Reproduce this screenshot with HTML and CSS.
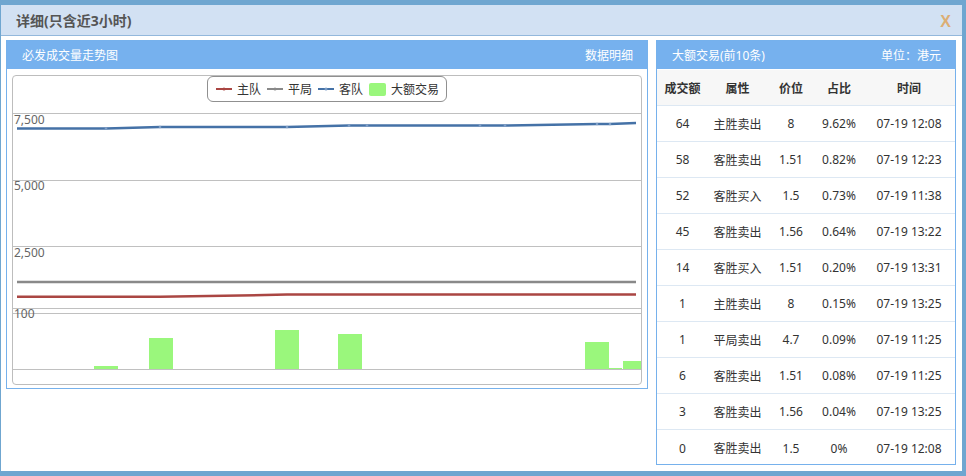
FILE: index.html
```html
<!DOCTYPE html>
<html lang="zh">
<head>
<meta charset="utf-8">
<title>详细</title>
<link rel="stylesheet" href="styles.css">
</head>
<body>
<div class="window">
  <div class="titlebar">
    <span class="title">详细(只含近3小时)</span>
    <span class="close">X</span>
  </div>
  <div class="content">
    <section class="panel panel-chart">
      <div class="panel-head"><span>必发成交量走势图</span><span>数据明细</span></div>
      <div class="chart">
        <div class="legend">
          <span class="item"><svg width="16" height="6" viewBox="0 0 16 6"><line x1="0" y1="3" x2="16" y2="3" stroke="#aa4643" stroke-width="2"/><circle cx="8" cy="3" r="1.5" fill="#aa4643"/></svg>主队</span>
          <span class="item"><svg width="16" height="6" viewBox="0 0 16 6"><line x1="0" y1="3" x2="16" y2="3" stroke="#898989" stroke-width="2"/><circle cx="8" cy="3" r="1.5" fill="#898989"/></svg>平局</span>
          <span class="item"><svg width="16" height="6" viewBox="0 0 16 6"><line x1="0" y1="3" x2="16" y2="3" stroke="#4572a7" stroke-width="2"/><circle cx="8" cy="3" r="1.5" fill="#7a9cc6"/></svg>客队</span>
          <span class="item"><span class="swatch"></span>大额交易</span>
        </div>
        <svg class="plot" width="628" height="282" viewBox="0 0 628 282">
          <g stroke="#c0c0c0" stroke-width="1">
            <line x1="0" y1="11.5" x2="628" y2="11.5"/>
            <line x1="0" y1="78.5" x2="628" y2="78.5"/>
            <line x1="0" y1="144.5" x2="628" y2="144.5"/>
            <line x1="0" y1="206.5" x2="628" y2="206.5"/>
            <line x1="0" y1="211.5" x2="628" y2="211.5"/>
            <line x1="0" y1="267.5" x2="628" y2="267.5"/>
          </g>
          <g class="axis">
            <text x="1" y="21.5">7,500</text>
            <text x="1" y="87.5">5,000</text>
            <text x="1" y="154.5">2,500</text>
            <text x="1" y="216">100</text>
          </g>
          <polyline fill="none" stroke="#4572a7" stroke-width="2.5" points="4,26.5 93,26.5 147,25 274,25 336,23.5 354,23.5 467,23.5 492,23.5 584,22 597,22 623,21"/>
          <g fill="#7f9fc7">
            <circle cx="93" cy="26.5" r="1.3"/><circle cx="147" cy="25" r="1.3"/><circle cx="274" cy="25" r="1.3"/><circle cx="336" cy="23.5" r="1.3"/><circle cx="354" cy="23.5" r="1.3"/><circle cx="467" cy="23.5" r="1.3"/><circle cx="492" cy="23.5" r="1.3"/><circle cx="584" cy="22" r="1.3"/><circle cx="597" cy="22" r="1.3"/>
          </g>
          <polyline fill="none" stroke="#898989" stroke-width="2.5" points="4,180 623,180"/>
          <polyline fill="none" stroke="#aa4643" stroke-width="2.5" points="4,194.8 147,194.8 274,192.6 623,192.6"/>
          <g fill="#9af77c">
            <rect x="81" y="264" width="24" height="3"/>
            <rect x="136" y="236" width="24" height="31"/>
            <rect x="262" y="228" width="24" height="39"/>
            <rect x="325" y="232" width="24" height="35"/>
            <rect x="572" y="240" width="24" height="27"/>
            <rect x="596" y="266" width="13" height="1"/>
            <rect x="610" y="259" width="18" height="8"/>
          </g>
        </svg>
      </div>
    </section>
    <section class="panel panel-table">
      <div class="panel-head"><span>大额交易(前10条)</span><span>单位：港元</span></div>
      <div class="table">
        <div class="row head"><span>成交额</span><span>属性</span><span>价位</span><span>占比</span><span>时间</span></div>
        <div class="row"><span>64</span><span>主胜卖出</span><span>8</span><span>9.62%</span><span>07-19 12:08</span></div>
        <div class="row"><span>58</span><span>客胜卖出</span><span>1.51</span><span>0.82%</span><span>07-19 12:23</span></div>
        <div class="row"><span>52</span><span>客胜买入</span><span>1.5</span><span>0.73%</span><span>07-19 11:38</span></div>
        <div class="row"><span>45</span><span>客胜卖出</span><span>1.56</span><span>0.64%</span><span>07-19 13:22</span></div>
        <div class="row"><span>14</span><span>客胜买入</span><span>1.51</span><span>0.20%</span><span>07-19 13:31</span></div>
        <div class="row"><span>1</span><span>主胜卖出</span><span>8</span><span>0.15%</span><span>07-19 13:25</span></div>
        <div class="row"><span>1</span><span>平局卖出</span><span>4.7</span><span>0.09%</span><span>07-19 11:25</span></div>
        <div class="row"><span>6</span><span>客胜卖出</span><span>1.51</span><span>0.08%</span><span>07-19 11:25</span></div>
        <div class="row"><span>3</span><span>客胜卖出</span><span>1.56</span><span>0.04%</span><span>07-19 13:25</span></div>
        <div class="row"><span>0</span><span>客胜卖出</span><span>1.5</span><span>0%</span><span>07-19 12:08</span></div>
      </div>
    </section>
  </div>
</div>
</body>
</html>
```

FILE: styles.css
```css
* { box-sizing: border-box; }
html, body { margin: 0; padding: 0; }
body {
  width: 966px;
  height: 476px;
  padding: 5px 4px 5px 1px;
  background: #6fa6d0;
  font-family: "Noto Sans", "Noto Sans CJK SC", sans-serif;
  font-size: 12px;
  color: #333;
  overflow: hidden;
}
.window {
  width: 961px;
  height: 466px;
  background: #fff;
  display: flex;
  flex-direction: column;
}
.titlebar {
  height: 31px;
  background: #d2e1f3;
  border-bottom: 1px solid #93b8dc;
  display: flex;
  align-items: center;
  justify-content: space-between;
  padding: 0 11px 0 15px;
}
.title {
  font-size: 14px;
  font-weight: bold;
  color: #555;
}
.close {
  font-family: "Liberation Sans", sans-serif;
  font-size: 16px;
  font-weight: bold;
  color: #dcae74;
  margin-top: 3px;
}
.content {
  display: flex;
  align-items: flex-start;
  gap: 8px;
  padding: 4px 0 0 5px;
}
.panel {
  border: 1px solid #76b1ec;
  background: #fff;
}
.panel-chart { width: 642px; height: 349px; }
.panel-table { width: 300px; height: 425px; overflow: hidden; }
.panel-head {
  height: 28px;
  background: #76b1ee;
  color: #fff;
  display: flex;
  align-items: center;
  justify-content: space-between;
  padding: 0 14px 0 15px;
  font-size: 12px;
}
.chart {
  margin: 6px 5px 0 5px;
  width: 630px;
  height: 310px;
  border: 1px solid #bdbdbd;
  border-radius: 4px;
  display: flex;
  flex-direction: column;
  align-items: center;
}
.legend {
  height: 26px;
  border: 1px solid #909090;
  border-radius: 6px;
  display: flex;
  align-items: center;
  gap: 6px;
  padding: 0 7px 0 8px;
  color: #333;
  font-size: 12px;
  white-space: nowrap;
}
.legend .item { display: flex; align-items: center; gap: 5px; }
.legend .swatch {
  display: inline-block;
  width: 17px;
  height: 13px;
  background: #9af77c;
  border-radius: 2px;
}
.plot { display: block; }
.axis text { font-size: 12px; fill: #666; font-family: "Noto Sans", sans-serif; }
.table { display: flex; flex-direction: column; margin-top: 1px; }
.row {
  display: grid;
  grid-template-columns: 51px 59px 48px 48px 92px;
  height: 36px;
  flex: none;
  border-bottom: 1px solid #dde8f3;
  align-items: center;
  text-align: center;
  color: #333;
}
.row.head {
  background: #f7f7f7;
  font-weight: bold;
}
.row:last-child { border-bottom: 0; }
```
